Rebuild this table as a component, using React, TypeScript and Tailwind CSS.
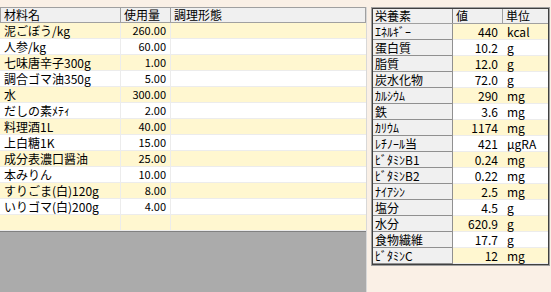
const ingredients = [
  ["泥ごぼう/kg", "260.00"],
  ["人参/kg", "60.00"],
  ["七味唐辛子300g", "1.00"],
  ["調合ゴマ油350g", "5.00"],
  ["水", "300.00"],
  ["だしの素ﾒﾃｨ", "2.00"],
  ["料理酒1L", "40.00"],
  ["上白糖1K", "15.00"],
  ["成分表濃口醤油", "25.00"],
  ["本みりん", "10.00"],
  ["すりごま(白)120g", "8.00"],
  ["いりゴマ(白)200g", "4.00"],
  ["", ""],
];

const nutrients = [
  ["ｴﾈﾙｷﾞｰ", "440", "kcal"],
  ["蛋白質", "10.2", "g"],
  ["脂質", "12.0", "g"],
  ["炭水化物", "72.0", "g"],
  ["ｶﾙｼｳﾑ", "290", "mg"],
  ["鉄", "3.6", "mg"],
  ["ｶﾘｳﾑ", "1174", "mg"],
  ["ﾚﾁﾉｰﾙ当", "421", "μgRA"],
  ["ﾋﾞﾀﾐﾝB1", "0.24", "mg"],
  ["ﾋﾞﾀﾐﾝB2", "0.22", "mg"],
  ["ﾅｲｱｼﾝ", "2.5", "mg"],
  ["塩分", "4.5", "g"],
  ["水分", "620.9", "g"],
  ["食物繊維", "17.7", "g"],
  ["ﾋﾞﾀﾐﾝC", "12", "mg"],
];

const font = "font-['MS_UI_Gothic','Noto_Sans_CJK_JP',sans-serif]";

export default function App() {
  return (
    <div className={`w-[551px] h-[292px] bg-[#faf0e6] pt-[7px] flex text-black ${font}`}>
      {/* 材料 */}
      <div className="w-[367px] h-[285px] bg-[#ababab] border-r border-[#d8d8d8] flex flex-col">
        <div className="flex h-[16px] bg-[#f0f0f0] border-y border-[#a0a0a0] text-[12px] leading-[14px]">
          <div className="w-[121px] pl-[3px] border-x border-[#a0a0a0]">材料名</div>
          <div className="w-[50px] pl-[3px] border-r border-[#a0a0a0]">使用量</div>
          <div className="flex-1 pl-[3px] border-r border-[#a0a0a0]">調理形態</div>
        </div>
        {ingredients.map(([name, qty], i) => (
          <div
            key={i}
            className={`flex h-[16px] border-b border-[#ececec] text-[12px] leading-[15px] ${i % 2 === 0 ? "bg-[#fff7d0]" : "bg-white"}`}
          >
            <div className="w-[121px] pl-[4px] border-r border-[#ececec] whitespace-nowrap">{name}</div>
            <div className="w-[50px] pr-[4px] text-right text-[11px] border-r border-[#ececec]">{qty}</div>
            <div className="flex-1" />
          </div>
        ))}
        <div className="border-t border-[#808080]" />
      </div>

      {/* 栄養素 */}
      <div className="ml-[4px] w-[179px] self-start border border-[#a0a0a0]">
        <div className="border border-[#404040]">
          <div className="flex h-[15px] bg-[#f0f0f0] text-[12px] leading-[14px] border-b border-[#a0a0a0]">
            <div className="w-[80px] pl-[2px] border-r border-[#808080]">栄養素</div>
            <div className="w-[50px] pl-[3px] border-r border-[#a0a0a0]">値</div>
            <div className="flex-1 pl-[3px]">単位</div>
          </div>
          {nutrients.map(([label, val, unit], i) => {
            const bg = i % 2 === 0 ? "bg-[#fff7d0]" : "bg-white";
            return (
              <div key={i} className="flex h-[16px] text-[12px] leading-[15px]">
                <div className="w-[80px] pl-[2px] bg-[#f0f0f0] border-b border-r border-[#909090] whitespace-nowrap">
                  {label}
                </div>
                <div className={`w-[50px] pr-[5px] text-right border-b border-[#ececec] ${bg}`}>{val}</div>
                <div className={`flex-1 pl-[4px] border-b border-[#ececec] ${bg}`}>{unit}</div>
              </div>
            );
          })}
        </div>
      </div>
    </div>
  );
}
